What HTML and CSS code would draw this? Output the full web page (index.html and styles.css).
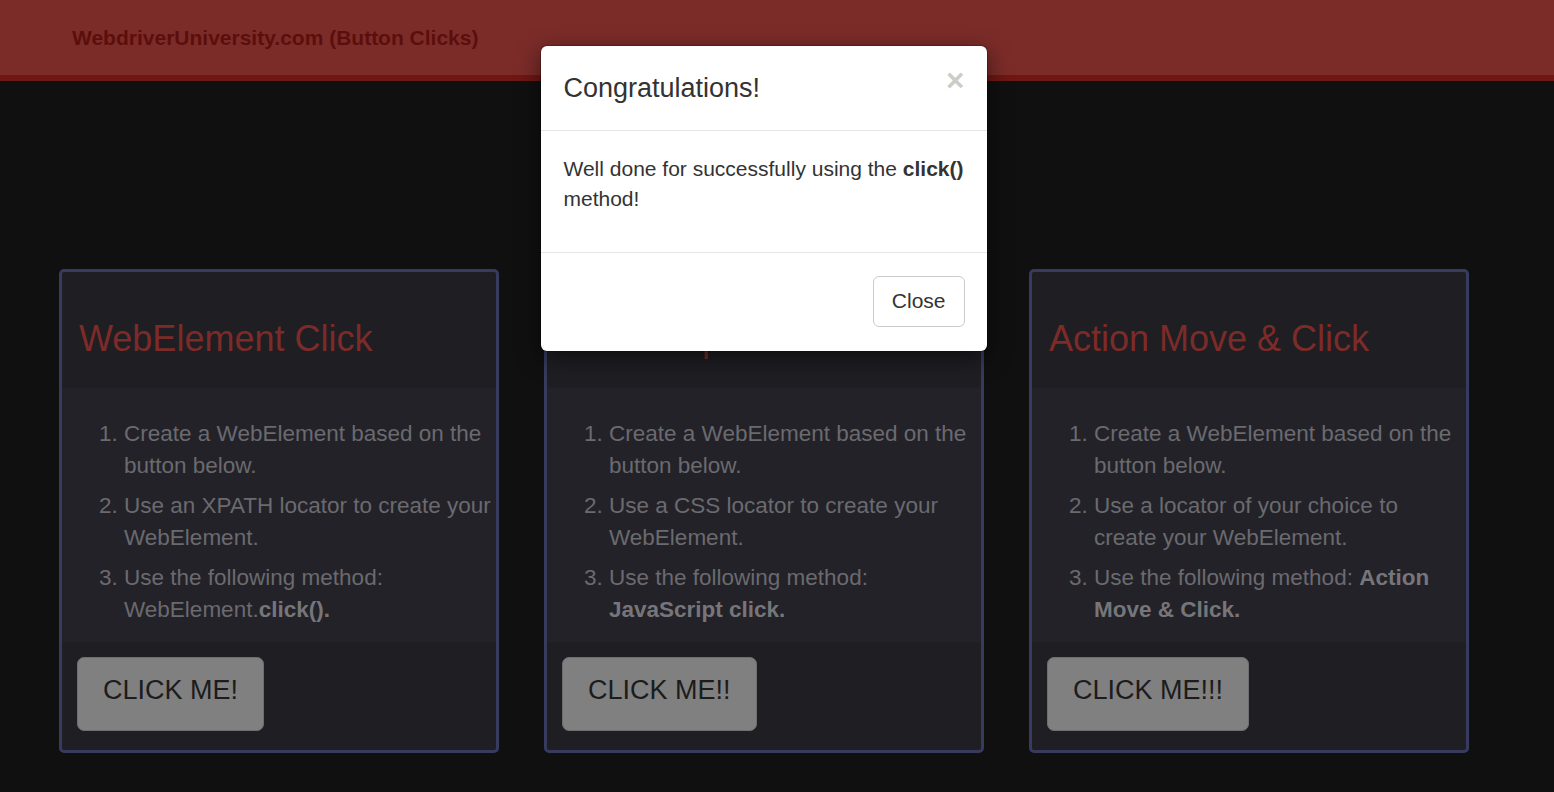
FILE: index.html
```html
<!DOCTYPE html>
<html lang="en">
<head>
<meta charset="utf-8">
<title>WebdriverUniversity.com (Button Clicks)</title>
<link rel="stylesheet" href="styles.css">
</head>
<body>
<header class="navbar">
  <span class="brand">WebdriverUniversity.com (Button Clicks)</span>
</header>

<main class="cards">
  <section class="card">
    <div class="card-head"><h2 class="card-title">WebElement Click</h2></div>
    <div class="card-body">
      <ol class="steps">
        <li>Create a WebElement based on the button below.</li>
        <li>Use an XPATH locator to create your WebElement.</li>
        <li>Use the following method: WebElement.<b>click().</b></li>
      </ol>
    </div>
    <div class="card-foot"><button class="click-btn">CLICK ME!</button></div>
  </section>

  <section class="card">
    <div class="card-head"><h2 class="card-title">JavaScript Click</h2></div>
    <div class="card-body">
      <ol class="steps">
        <li>Create a WebElement based on the button below.</li>
        <li>Use a CSS locator to create your WebElement.</li>
        <li>Use the following method: <b>JavaScript click.</b></li>
      </ol>
    </div>
    <div class="card-foot"><button class="click-btn">CLICK ME!!</button></div>
  </section>

  <section class="card">
    <div class="card-head"><h2 class="card-title">Action Move &amp; Click</h2></div>
    <div class="card-body">
      <ol class="steps">
        <li>Create a WebElement based on the button below.</li>
        <li>Use a locator of your choice to create your WebElement.</li>
        <li>Use the following method: <b>Action Move &amp; Click.</b></li>
      </ol>
    </div>
    <div class="card-foot"><button class="click-btn">CLICK ME!!!</button></div>
  </section>
</main>

<div class="modal" role="dialog">
  <div class="modal-header">
    <button class="modal-close" aria-label="Close">&times;</button>
    <h4 class="modal-title">Congratulations!</h4>
  </div>
  <div class="modal-body">
    <p>Well done for successfully using the <b>click()</b> method!</p>
  </div>
  <div class="modal-footer">
    <button class="btn-close">Close</button>
  </div>
</div>
</body>
</html>
```
FILE: styles.css
```css
* { box-sizing: border-box; }

html, body {
  margin: 0;
  padding: 0;
}

body {
  background: #101010;
  font-family: "Liberation Sans", Arial, Helvetica, sans-serif;
  color: #333;
  width: 1554px;
  height: 792px;
  overflow: hidden;
  position: relative;
}

.navbar {
  height: 81px;
  background: #7b2c29;
  border-bottom: 6px solid #6f1713;
  display: flex;
  align-items: center;
  padding-left: 72px;
}

.brand {
  font-size: 21px;
  font-weight: bold;
  color: #5b0f0c;
  line-height: 30px;
}

.cards {
  display: flex;
  gap: 45px;
  padding-left: 59px;
  margin-top: 188px;
}

.card {
  width: 440px;
  border: 3px solid #363b5f;
  border-radius: 5px;
  background: #1f1e23;
  overflow: hidden;
}

.card-head {
  height: 116px;
  padding: 46px 17px 0;
}

.card-title {
  margin: 0;
  font-size: 36px;
  font-weight: normal;
  line-height: 42px;
  color: #7d2b28;
  white-space: nowrap;
}

.card-body {
  background: #232228;
  height: 254px;
  padding: 30px 0 0;
}

.steps {
  margin: 0;
  padding: 0 0 0 62px;
  font-size: 22.5px;
  line-height: 32px;
  color: #6a6a6f;
}

.steps li {
  margin-bottom: 8px;
}

.steps li:last-child { margin-bottom: 0; }

.steps b {
  color: #76767a;
  font-weight: bold;
}

.card-foot {
  padding: 15px 15px 19px;
}

.click-btn {
  font-family: "Liberation Sans", Arial, Helvetica, sans-serif;
  font-size: 27px;
  line-height: 38px;
  padding: 13px 25px 21px;
  background: #808080;
  color: #1c1c1c;
  border: 1px solid #6e6e6e;
  border-radius: 7px;
  cursor: pointer;
}

/* Modal */
.modal {
  position: absolute;
  left: 540px;
  top: 45px;
  width: 448px;
  background: #fff;
  border: 1.5px solid rgba(0, 0, 0, 0.2);
  border-radius: 7px;
  box-shadow: 0 7px 22px rgba(0, 0, 0, 0.5);
  background-clip: padding-box;
}

.modal-header {
  padding: 23px 22.5px 22px;
  border-bottom: 1.5px solid #e5e5e5;
}

.modal-title {
  margin: 0;
  font-size: 27px;
  font-weight: normal;
  line-height: 38.6px;
  color: #333;
}

.modal-close {
  float: right;
  margin-top: -4px;
  padding: 0;
  border: 0;
  background: transparent;
  font-family: "Liberation Sans", Arial, Helvetica, sans-serif;
  font-size: 31.5px;
  font-weight: bold;
  line-height: 1;
  color: #000;
  opacity: 0.2;
  cursor: pointer;
}

.modal-body {
  padding: 23.5px 22.5px 22.5px;
}

.modal-body p {
  margin: 0 0 15px;
  font-size: 21px;
  line-height: 30px;
  color: #333;
}

.modal-footer {
  padding: 23px 22.5px 24px;
  border-top: 1.5px solid #e5e5e5;
  display: flex;
  justify-content: flex-end;
}

.btn-close {
  font-family: "Liberation Sans", Arial, Helvetica, sans-serif;
  font-size: 21px;
  line-height: 30px;
  padding: 9.5px 18px;
  background: #fff;
  color: #333;
  border: 1.5px solid #ccc;
  border-radius: 6px;
  cursor: pointer;
}
```
